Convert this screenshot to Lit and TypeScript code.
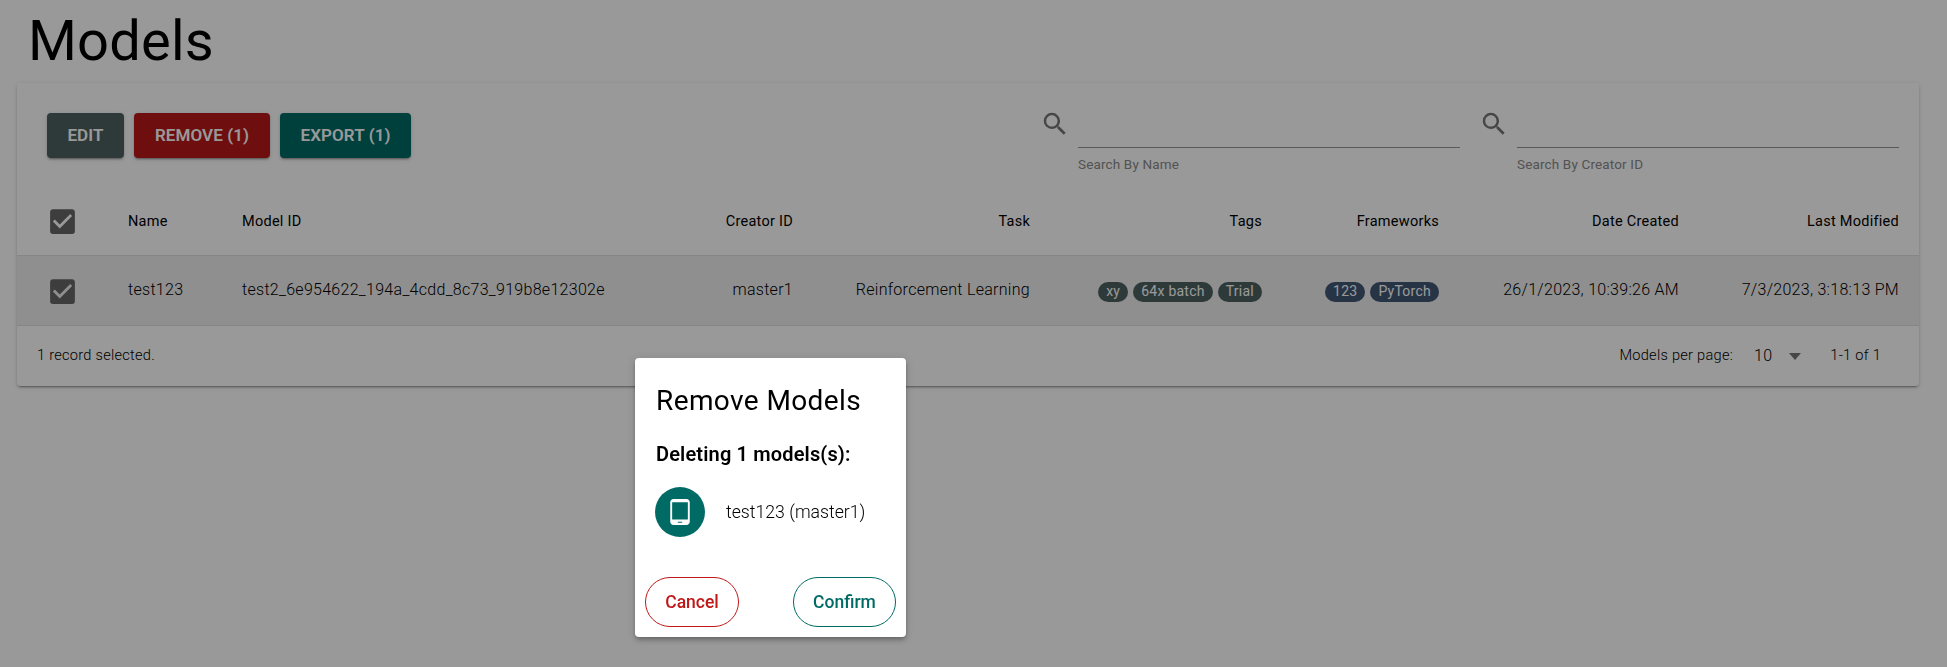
import { LitElement, html, css, svg } from "lit";
import { customElement } from "lit/decorators.js";

const MAGNIFY = "M9.5,3A6.5,6.5 0 0,1 16,9.5C16,11.11 15.41,12.59 14.44,13.73L14.71,14H15.5L20.5,19L19,20.5L14,15.5V14.71L13.73,14.44C12.59,15.41 11.11,16 9.5,16A6.5,6.5 0 0,1 3,9.5A6.5,6.5 0 0,1 9.5,3M9.5,5C7,5 5,7 5,9.5C5,12 7,14 9.5,14C12,14 14,12 14,9.5C14,7 12,5 9.5,5Z";
const CHECK = "M10,17L5,12L6.41,10.58L10,14.17L17.59,6.58L19,8M19,3H5C3.89,3 3,3.89 3,5V19A2,2 0 0,0 5,21H19A2,2 0 0,0 21,19V5C21,3.89 20.1,3 19,3Z";
const TABLET = "M18 0H6C4.34 0 3 1.34 3 3v18c0 1.66 1.34 3 3 3h12c1.66 0 3-1.34 3-3V3c0-1.66-1.34-3-3-3zm-4 22h-4v-1h4v1zm5.25-3H4.75V3h14.5v16z";
const icon = (d: string, cls: string) => html`<svg class=${cls} viewBox="0 0 24 24">${svg`<path d=${d}></path>`}</svg>`;

@customElement("app-root")
export class AppRoot extends LitElement {
  static styles = css`
    :host { display: block; min-height: 667px; background: #fff; font-family: Roboto, "Liberation Sans", sans-serif; color: #000; box-sizing: border-box; padding: 0 28px 0 17px; }
    h1 { margin: 0; padding: 0 0 0 11px; height: 83px; box-sizing: border-box; font-size: 56px; font-weight: 370; line-height: 83px; letter-spacing: .2px; }
    .card { background: #fff; border-radius: 4px; box-shadow: 0 3px 1px -2px rgba(0,0,0,.2), 0 2px 2px 0 rgba(0,0,0,.14), 0 1px 5px 0 rgba(0,0,0,.12); height: 303px; display: flex; flex-direction: column; }
    .bar { display: flex; height: 104px; padding: 30px 20px 0 30px; box-sizing: border-box; }
    .actions { display: flex; gap: 10px; flex: 1; align-items: flex-start; }
    .btn { height: 45px; box-sizing: border-box; border-radius: 4px; padding-bottom: 2px; color: #fff; font-size: 17px; letter-spacing: .1px; font-weight: 600; display: flex; align-items: center; justify-content: center; box-shadow: 0 3px 1px -2px rgba(0,0,0,.2), 0 2px 2px 0 rgba(0,0,0,.14), 0 1px 5px 0 rgba(0,0,0,.12); }
    .edit { width: 77px; background: #4d6060; }
    .remove { width: 136px; background: #b71818; }
    .export { width: 131px; background: #006b64; }
    .search { display: flex; gap: 8px; }
    .search + .search { margin-left: 19px; }
    .search svg { width: 30px; height: 30px; fill: #757575; margin-top: -4px; flex: none; }
    .field { display: flex; flex-direction: column; width: 382px; }
    .search:first-of-type .field { width: 381px; }
    .line { height: 35px; border-bottom: 1px solid #949494; box-sizing: border-box; }
    .hint { font-size: 13.5px; letter-spacing: .15px; font-weight: 400; color: #8a8a8a; margin-top: 8px; line-height: 16px; }
    .row { display: grid; grid-template-columns: 111px 114px 366px 185px 237px 232px 177px 240px 220px; align-items: center; padding-right: 20px; }
    .head { height: 68px; font-size: 14.5px; letter-spacing: .0178em; font-weight: 400; border-bottom: 1px solid #e0e0e0; }
    .body { height: 69px; font-size: 16px; letter-spacing: .0178em; font-weight: 300; background: #eee; border-bottom: 1px solid #e0e0e0; }
    .body > div:not(.chips) { margin-top: -2px; }
    .r { text-align: right; white-space: nowrap; }
    .body > .cb, .head > .cb { width: 33px; height: 33px; fill: #666; margin-left: 29px; display: block; margin-top: 1px; }
    .chips { display: flex; justify-content: flex-end; gap: 5px; padding-top: 2px; }
    .chip { height: 20px; border-radius: 10px; padding: 0 8px; color: #fff; font-size: 14px; letter-spacing: .25px; font-weight: 420; line-height: 19px; }
    .tag { background: #4c6260; }
    .fw { background: #405775; }
    .foot { flex: 1; display: flex; align-items: center; padding: 0 38px 2px 20px; font-size: 14.6px; letter-spacing: .26px; font-weight: 300; }
    .grow { flex: 1; }
    .count { font-size: 16px; margin-left: 21px; }
    .arrow { width: 0; height: 0; border-left: 6px solid transparent; border-right: 6px solid transparent; border-top: 7px solid #757575; margin: 3px 29px 0 17px; }
    .overlay { position: fixed; inset: 0; background: rgba(0,0,0,.4); }
    .dialog { position: absolute; left: 635px; top: 358px; width: 271px; height: 279px; box-sizing: border-box; background: #fff; border-radius: 4px; padding: 0 10px 10px 21px; display: flex; flex-direction: column; box-shadow: 0 2px 4px -1px rgba(0,0,0,.2), 0 4px 5px 0 rgba(0,0,0,.14), 0 1px 10px 0 rgba(0,0,0,.12); }
    h2 { margin: 0; padding-top: 23px; font-size: 28px; font-weight: 450; line-height: 40px; letter-spacing: .4px; color: #000; white-space: nowrap; }
    h3 { margin: 0; padding-top: 19px; font-size: 20px; font-weight: 600; line-height: 28px; letter-spacing: .15px; color: #000; white-space: nowrap; }
    .item { display: flex; align-items: center; gap: 21px; margin: 19px 0 0 -1px; font-size: 17.7px; font-weight: 300; color: #000; white-space: nowrap; }
    .avatar { width: 50px; height: 50px; border-radius: 50%; background: #006b64; display: flex; align-items: center; justify-content: center; flex: none; }
    .avatar svg { width: 26px; height: 26px; fill: #fff; }
    .dlg-actions { display: flex; justify-content: space-between; margin: auto 0 0 -11px; }
    .pill { height: 50px; box-sizing: border-box; border-radius: 25px; border: 1px solid; display: flex; align-items: center; justify-content: center; font-size: 17.5px; font-weight: 500; background: #fff; }
    .cancel { width: 94px; color: #c01818; }
    .confirm { width: 103px; color: #006b64; }
  `;

  render() {
    return html`
      <h1>Models</h1>
      <section class="card">
        <div class="bar">
          <div class="actions">
            <div class="btn edit">EDIT</div>
            <div class="btn remove">REMOVE (1)</div>
            <div class="btn export">EXPORT (1)</div>
          </div>
          <div class="search">${icon(MAGNIFY, "")}<div class="field"><div class="line"></div><div class="hint">Search By Name</div></div></div>
          <div class="search">${icon(MAGNIFY, "")}<div class="field"><div class="line"></div><div class="hint">Search By Creator ID</div></div></div>
        </div>
        <div class="row head">
          ${icon(CHECK, "cb")}
          <div>Name</div><div>Model ID</div>
          <div class="r">Creator ID</div><div class="r">Task</div><div class="r">Tags</div>
          <div class="r">Frameworks</div><div class="r">Date Created</div><div class="r">Last Modified</div>
        </div>
        <div class="row body">
          ${icon(CHECK, "cb")}
          <div>test123</div><div>test2_6e954622_194a_4cdd_8c73_919b8e12302e</div>
          <div class="r">master1</div><div class="r">Reinforcement Learning</div>
          <div class="chips"><span class="chip tag">xy</span><span class="chip tag">64x batch</span><span class="chip tag">Trial</span></div>
          <div class="chips"><span class="chip fw">123</span><span class="chip fw">PyTorch</span></div>
          <div class="r">26/1/2023, 10:39:26 AM</div><div class="r">7/3/2023, 3:18:13 PM</div>
        </div>
        <div class="foot">
          <span>1 record selected.</span><span class="grow"></span>
          <span>Models per page:</span><span class="count">10</span><span class="arrow"></span><span>1-1 of 1</span>
        </div>
      </section>
      <div class="overlay"></div>
      <div class="dialog">
        <h2>Remove Models</h2>
        <h3>Deleting 1 models(s):</h3>
        <div class="item"><div class="avatar">${icon(TABLET, "")}</div><span>test123 (master1)</span></div>
        <div class="dlg-actions"><div class="pill cancel">Cancel</div><div class="pill confirm">Confirm</div></div>
      </div>
    `;
  }
}
